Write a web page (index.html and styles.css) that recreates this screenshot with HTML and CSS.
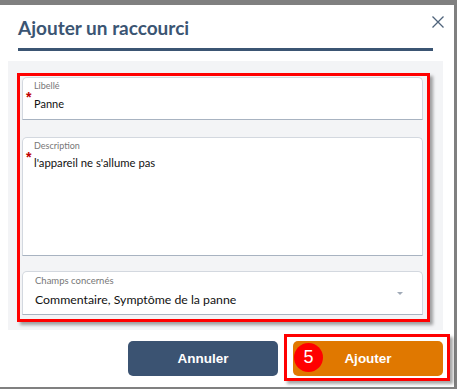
FILE: index.html
```html
<!DOCTYPE html>
<html lang="fr">
<head>
  <meta charset="UTF-8" />
  <title>Ajouter un raccourci</title>
  <link rel="stylesheet" href="styles.css">
</head>
<body>

  <div class="dialog">
    <header class="dialog-head">
      <h2 class="dialog-title">Ajouter un raccourci</h2>
    </header>
    <button class="close" aria-label="Fermer">
      <svg width="12" height="12" viewBox="0 0 12 12">
        <path d="M0.5 0.5 L11.5 11.5 M11.5 0.5 L0.5 11.5" stroke="#4f637b" stroke-width="1.3" fill="none" />
      </svg>
    </button>

    <section class="dialog-body">
      <div class="highlight">
        <div class="field field-libelle">
          <span class="req">*</span>
          <div class="field-main">
            <label>Libellé</label>
            <div class="value">Panne</div>
          </div>
        </div>

        <div class="field field-desc">
          <span class="req">*</span>
          <div class="field-main">
            <label>Description</label>
            <div class="value value-tight">l'appareil ne s'allume pas</div>
          </div>
        </div>

        <div class="field field-select">
          <div class="field-main">
            <label>Champs concernés</label>
            <div class="value value-big">Commentaire, Symptôme de la panne</div>
          </div>
          <span class="caret"></span>
        </div>
      </div>
    </section>

    <footer class="dialog-foot">
      <button class="btn btn-cancel">Annuler</button>
      <div class="highlight-btn">
        <span class="step">5</span>
        <button class="btn btn-add">Ajouter</button>
      </div>
    </footer>
  </div>

</body>
</html>
```

FILE: styles.css
```css
body {
  margin: 0;
  background-color: #808080;
  font-family: Lato, "Open Sans", sans-serif;
}

.dialog {
  position: relative;
  background-color: #fff;
  margin: 5px 3px 0 0;
  height: 382px;
}

.dialog-head {
  margin: 0 21px 0 18px;
  padding: 12px 0 9px;
  border-bottom: 3px solid #3b5573;
}

.dialog-title {
  margin: 0;
  font-size: 19px;
  line-height: 22px;
  font-weight: 700;
  color: #3b5573;
}

.close {
  position: absolute;
  top: 11px;
  right: 10px;
  padding: 0;
  border: none;
  background: none;
  line-height: 0;
}

.dialog-body {
  margin: 10px 11px 0 8px;
  padding: 12px 0 0 9px;
  height: 269px;
  box-sizing: border-box;
  background-color: #f3f4f6;
}

.highlight {
  width: 413px;
  box-sizing: border-box;
  border: 3px solid #ff0000;
  padding: 1px 4px 4px 2px;
  box-shadow: 3px 3px 3px rgba(0, 0, 0, 0.35);
}

.field {
  display: flex;
  box-sizing: border-box;
  background-color: #fff;
  border: 1px solid #d3d8df;
  border-bottom-color: #a8b3c1;
  border-radius: 5px 5px 0 0;
}

.field-libelle {
  height: 43px;
  margin-bottom: 17px;
}

.field-desc {
  height: 119px;
  margin-bottom: 15px;
}

.field-select {
  height: 44px;
  padding-left: 12px;
}

.req {
  width: 8px;
  padding-left: 3px;
  margin-top: 12px;
  font-family: "Liberation Sans", Arial, sans-serif;
  font-size: 14px;
  font-weight: 700;
  line-height: 14px;
  color: #c00000;
}

.field-main {
  flex: 1;
  padding-top: 2px;
}

.field-main label {
  display: block;
  font-size: 9px;
  line-height: 12px;
  color: #777;
}

.value {
  margin-top: 4px;
  font-size: 11px;
  line-height: 16px;
  color: #111;
}

.value-tight {
  margin-top: 3px;
  font-size: 11.3px;
}

.field-select .field-main {
  padding-top: 3px;
}

.field-select .field-main label {
  font-size: 9.5px;
}

.value-big {
  margin-top: 5px;
  font-size: 12.3px;
}

.caret {
  align-self: flex-start;
  margin: 20px 19px 0 0;
  border-left: 3.5px solid transparent;
  border-right: 3.5px solid transparent;
  border-top: 3.5px solid #a0aab7;
}

.dialog-foot {
  display: flex;
  justify-content: flex-end;
  align-items: flex-start;
  gap: 6px;
  margin-top: 4px;
  padding-right: 4px;
}

.btn {
  width: 150px;
  height: 35px;
  border: none;
  border-radius: 5px;
  color: #fff;
  font-family: "Liberation Sans", Arial, sans-serif;
  font-size: 13.5px;
  font-weight: 700;
}

.btn-cancel {
  margin-top: 7px;
  background-color: #3b5372;
}

.highlight-btn {
  position: relative;
  border: 3px solid #ff0000;
  padding: 4px 4px 2px 6px;
  box-shadow: 3px 3px 3px rgba(0, 0, 0, 0.35);
}

.btn-add {
  display: block;
  background-color: #e07800;
}

.step {
  position: absolute;
  left: 7px;
  top: 6px;
  width: 29px;
  height: 29px;
  border-radius: 50%;
  background-color: #ff0000;
  color: #fff;
  font-family: "Liberation Sans", Arial, sans-serif;
  font-size: 18px;
  line-height: 29px;
  text-align: center;
}
```
